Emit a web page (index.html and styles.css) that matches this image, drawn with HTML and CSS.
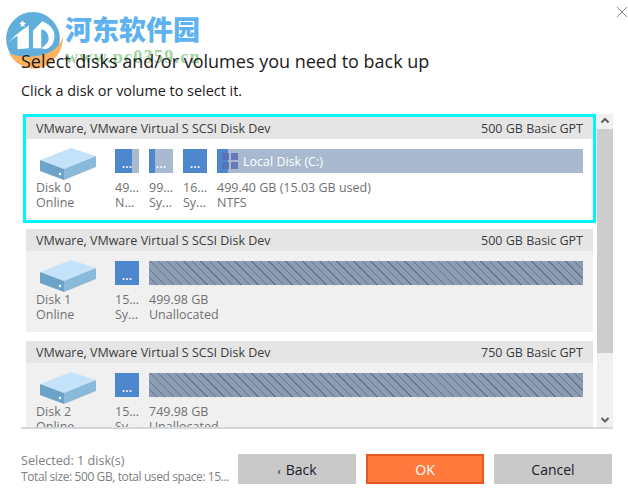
FILE: index.html
```html
<!DOCTYPE html>
<html lang="en">
<head>
    <meta charset="UTF-8">
    <title>Select disks</title>
    <link rel="stylesheet" href="styles.css">
</head>
<body>
    <!-- site watermark, sits under the dialog text -->
    <div class="watermark">
        <svg class="wm-logo" width="60" height="62" viewBox="0 0 58 60">
            <circle cx="28" cy="27" r="26" fill="#5faedb"/>
            <path d="M3 32Q10 23 24 14L24 36L13 37L13 24Q7 27 3 32Z" fill="#fff"/>
            <path d="M28 19L37 10C46 13 51 21 48 29C47 33 44 36 40 37L36 36C41 33 44 29 43 25C42 20 39 18 36 18L36 36L28 36Z" fill="#fff"/>
            <path d="M18 9l1 2.200 2.300.3-1.700 1.600.4 2.300-2-1.100-2 1.100.4-2.300-1.700-1.600 2.300-.3z" fill="#fff"/>
            <path d="M5 41C12 55 30 60 42 52C52 46 57 36 57 25C54 34 48 40 38 42C27 45 14 45 5 41Z" fill="#fbb262"/>
        </svg>
        <div class="wm-text">
            <div class="wm-name">河东软件园</div>
            <div class="wm-url">www.pc0359.cn</div>
        </div>
    </div>

    <div class="dialog">
        <svg class="close-icon" width="10" height="10" viewBox="0 0 10 10"><path d="M0 0L10 10M10 0L0 10" stroke="#8a8a8a" stroke-width="1" fill="none"/></svg>

        <h1>Select disks and/or volumes you need to back up</h1>
        <p class="hint">Click a disk or volume to select it.</p>

        <div class="list-wrap">
            <div class="disk-list">
                <div class="disk selected">
                    <div class="disk-head"><span>VMware, VMware Virtual S SCSI Disk Dev</span><span>500 GB Basic GPT</span></div>
                    <div class="disk-body">
                        <div class="disk-info">
                            <svg class="disk-icon" width="58" height="34" viewBox="0 0 58 34"><use href="#hdd"/></svg>
                            <div class="meta">Disk 0</div>
                            <div class="meta">Online</div>
                        </div>
                        <div class="part">
                            <div class="bar"><div class="used" style="width: 17px"></div><span class="dots">...</span></div>
                            <div class="meta">49...</div>
                            <div class="meta">N...</div>
                        </div>
                        <div class="part">
                            <div class="bar"><div class="used" style="width: 6px"></div><span class="dots">...</span></div>
                            <div class="meta">99...</div>
                            <div class="meta">Sy...</div>
                        </div>
                        <div class="part">
                            <div class="bar"><div class="used" style="width: 24px"></div><span class="dots">...</span></div>
                            <div class="meta">16...</div>
                            <div class="meta">Sy...</div>
                        </div>
                        <div class="part wide">
                            <div class="bar">
                                <div class="used" style="width: 11px"></div>
                                <svg class="win-icon" width="16" height="16" viewBox="0 0 16 16"><path d="M0 0h7v7H0zM9 0h7v7H9zM0 9h7v7H0zM9 9h7v7H9z" fill="#5b6fb3" fill-opacity="0.85"/></svg>
                                <span class="vol-name">Local Disk (C:)</span>
                            </div>
                            <div class="meta">499.40 GB (15.03 GB used)</div>
                            <div class="meta">NTFS</div>
                        </div>
                    </div>
                </div>

                <div class="disk">
                    <div class="disk-head"><span>VMware, VMware Virtual S SCSI Disk Dev</span><span>500 GB Basic GPT</span></div>
                    <div class="disk-body">
                        <div class="disk-info">
                            <svg class="disk-icon" width="58" height="34" viewBox="0 0 58 34"><use href="#hdd"/></svg>
                            <div class="meta">Disk 1</div>
                            <div class="meta">Online</div>
                        </div>
                        <div class="part">
                            <div class="bar"><div class="used" style="width: 24px"></div><span class="dots">...</span></div>
                            <div class="meta">15...</div>
                            <div class="meta">Sy...</div>
                        </div>
                        <div class="part wide">
                            <div class="bar hatched"></div>
                            <div class="meta">499.98 GB</div>
                            <div class="meta">Unallocated</div>
                        </div>
                    </div>
                </div>

                <div class="disk">
                    <div class="disk-head"><span>VMware, VMware Virtual S SCSI Disk Dev</span><span>750 GB Basic GPT</span></div>
                    <div class="disk-body">
                        <div class="disk-info">
                            <svg class="disk-icon" width="58" height="34" viewBox="0 0 58 34"><use href="#hdd"/></svg>
                            <div class="meta">Disk 2</div>
                            <div class="meta">Online</div>
                        </div>
                        <div class="part">
                            <div class="bar"><div class="used" style="width: 24px"></div><span class="dots">...</span></div>
                            <div class="meta">15...</div>
                            <div class="meta">Sy...</div>
                        </div>
                        <div class="part wide">
                            <div class="bar hatched"></div>
                            <div class="meta">749.98 GB</div>
                            <div class="meta">Unallocated</div>
                        </div>
                    </div>
                </div>
            </div>

            <div class="scrollbar">
                <svg class="arrow" width="16" height="15" viewBox="0 0 16 15"><path d="M4.5 8.5L8 5l3.500 3.500" stroke="#606060" stroke-width="2" fill="none"/></svg>
                <div class="thumb"></div>
                <svg class="arrow bottom" width="16" height="15" viewBox="0 0 16 15"><path d="M4.500 6L8 9.500 11.500 6" stroke="#606060" stroke-width="2" fill="none"/></svg>
            </div>
        </div>

        <div class="footer">
            <div class="summary">
                <div>Selected: 1 disk(s)</div>
                <div class="summary-total">Total size: 500 GB, total used space: 15...</div>
            </div>
            <button class="btn"><span class="back-mark">&lsaquo;</span>Back</button>
            <button class="btn btn-ok">OK</button>
            <button class="btn">Cancel</button>
        </div>
    </div>

    <svg width="0" height="0" class="defs">
        <defs>
            <g id="hdd">
                <path d="M1 13L32 1L57 9L25 22Z" fill="#c4e3fb"/>
                <path d="M1 13L25 22L25 33L1 24Z" fill="#6ea3c9"/>
                <path d="M25 22L57 9L57 20L25 33Z" fill="#8bb9da"/>
                <circle cx="21" cy="27" r="1.200" fill="#fff"/>
            </g>
        </defs>
    </svg>
</body>
</html>
```

FILE: styles.css
```css
body {
    font-family: "Open Sans", "Liberation Sans", sans-serif;
    background-color: #fff;
    margin: 0;
    padding: 0;
    color: #222;
    overflow: hidden;
}

.dialog {
    width: 628px;
    height: 503px;
    padding: 48px 15px 0 21px;
    box-sizing: border-box;
    position: relative;
    z-index: 1;
    overflow: hidden;
}

.close-icon {
    position: absolute;
    top: 7px;
    right: 1px;
}

.defs {
    position: absolute;
}

h1 {
    margin: 0;
    font-size: 18px;
    line-height: 26px;
    font-weight: 400;
    color: #1a1a1a;
}

.hint {
    margin: 7px 0 0;
    font-size: 14.4px;
    line-height: 20px;
    color: #1a1a1a;
}

.list-wrap {
    display: flex;
    height: 315px;
    margin-top: 13px;
    border-bottom: 2px solid #d3d8dd;
    box-sizing: border-box;
}

.disk-list {
    flex: 1;
    overflow: hidden;
    padding: 3px 4px 0 5px;
    display: flex;
    flex-direction: column;
    gap: 9px;
}

.disk {
    flex: none;
    height: 103px;
    background-color: #f0f0f0;
    font-size: 12.5px;
}

.disk.selected {
    background-color: #fff;
    outline: 3px solid #00f6ff;
}

.disk-head {
    height: 22px;
    line-height: 24px;
    padding: 0 10px;
    display: flex;
    justify-content: space-between;
    background-color: #e5e5e5;
    color: #3c3c3c;
}

.disk-body {
    display: flex;
    padding: 10px 10px 0;
    gap: 10px;
}

.disk-info {
    flex: none;
    width: 69px;
    padding-top: 31px;
    position: relative;
}

.disk-icon {
    position: absolute;
    top: -2px;
    left: 3px;
}

.part {
    flex: none;
    width: 24px;
    white-space: nowrap;
}

.part.wide {
    flex: 1;
}

.bar {
    height: 24px;
    background-color: #a8b9d0;
    position: relative;
    display: flex;
    align-items: center;
    margin-bottom: 7px;
}

.bar.hatched {
    background: repeating-linear-gradient(45deg, #8b9db3 0, #8b9db3 5px, #66778c 5px, #66778c 6px);
}

.used {
    align-self: stretch;
    background-color: #4d87cd;
}

.dots {
    position: absolute;
    left: 0;
    right: 0;
    bottom: 1px;
    text-align: center;
    color: #fff;
    line-height: 16px;
    font-weight: 600;
}

.win-icon {
    position: absolute;
    left: 5px;
    top: 4px;
}

.vol-name {
    position: absolute;
    left: 26px;
    color: #fff;
    font-weight: 500;
}

.meta {
    line-height: 15px;
    color: #707070;
}

.scrollbar {
    flex: none;
    width: 16px;
    background-color: #f0f0f0;
    display: flex;
    flex-direction: column;
}

.arrow {
    flex: none;
}

.arrow.bottom {
    margin-top: auto;
}

.thumb {
    height: 224px;
    background-color: #cdcdcd;
}

.footer {
    display: flex;
    align-items: center;
    margin-top: 24px;
    gap: 10px;
}

.summary {
    width: 207px;
    font-size: 12.6px;
    line-height: 16px;
    color: #808080;
    white-space: nowrap;
}

.summary-total {
    font-size: 12px;
    letter-spacing: -0.4px;
}

.btn {
    width: 118px;
    height: 30px;
    padding: 0;
    border: none;
    background-color: #c9c9c9;
    font-family: inherit;
    font-size: 14px;
    color: #1a1a2a;
}

.back-mark {
    font-size: 11px;
    margin-right: 5px;
}

.btn-ok {
    background-color: #ff7a3c;
    border: 2px solid #e65a20;
    color: #fff;
}

.watermark {
    position: absolute;
    top: 11px;
    left: 4px;
    display: flex;
    gap: 1px;
}

.wm-text {
    padding-top: 1px;
}

.wm-name {
    font-family: "Noto Sans CJK SC", sans-serif;
    font-size: 27px;
    line-height: 34px;
    font-weight: 900;
    color: #5fb2f0;
}

.wm-url {
    font-family: "Liberation Serif", serif;
    font-size: 18px;
    line-height: 18px;
    margin-top: 2px;
    font-weight: 700;
    letter-spacing: 1.3px;
    color: #7cc07c;
    opacity: 0.7;
}
```
